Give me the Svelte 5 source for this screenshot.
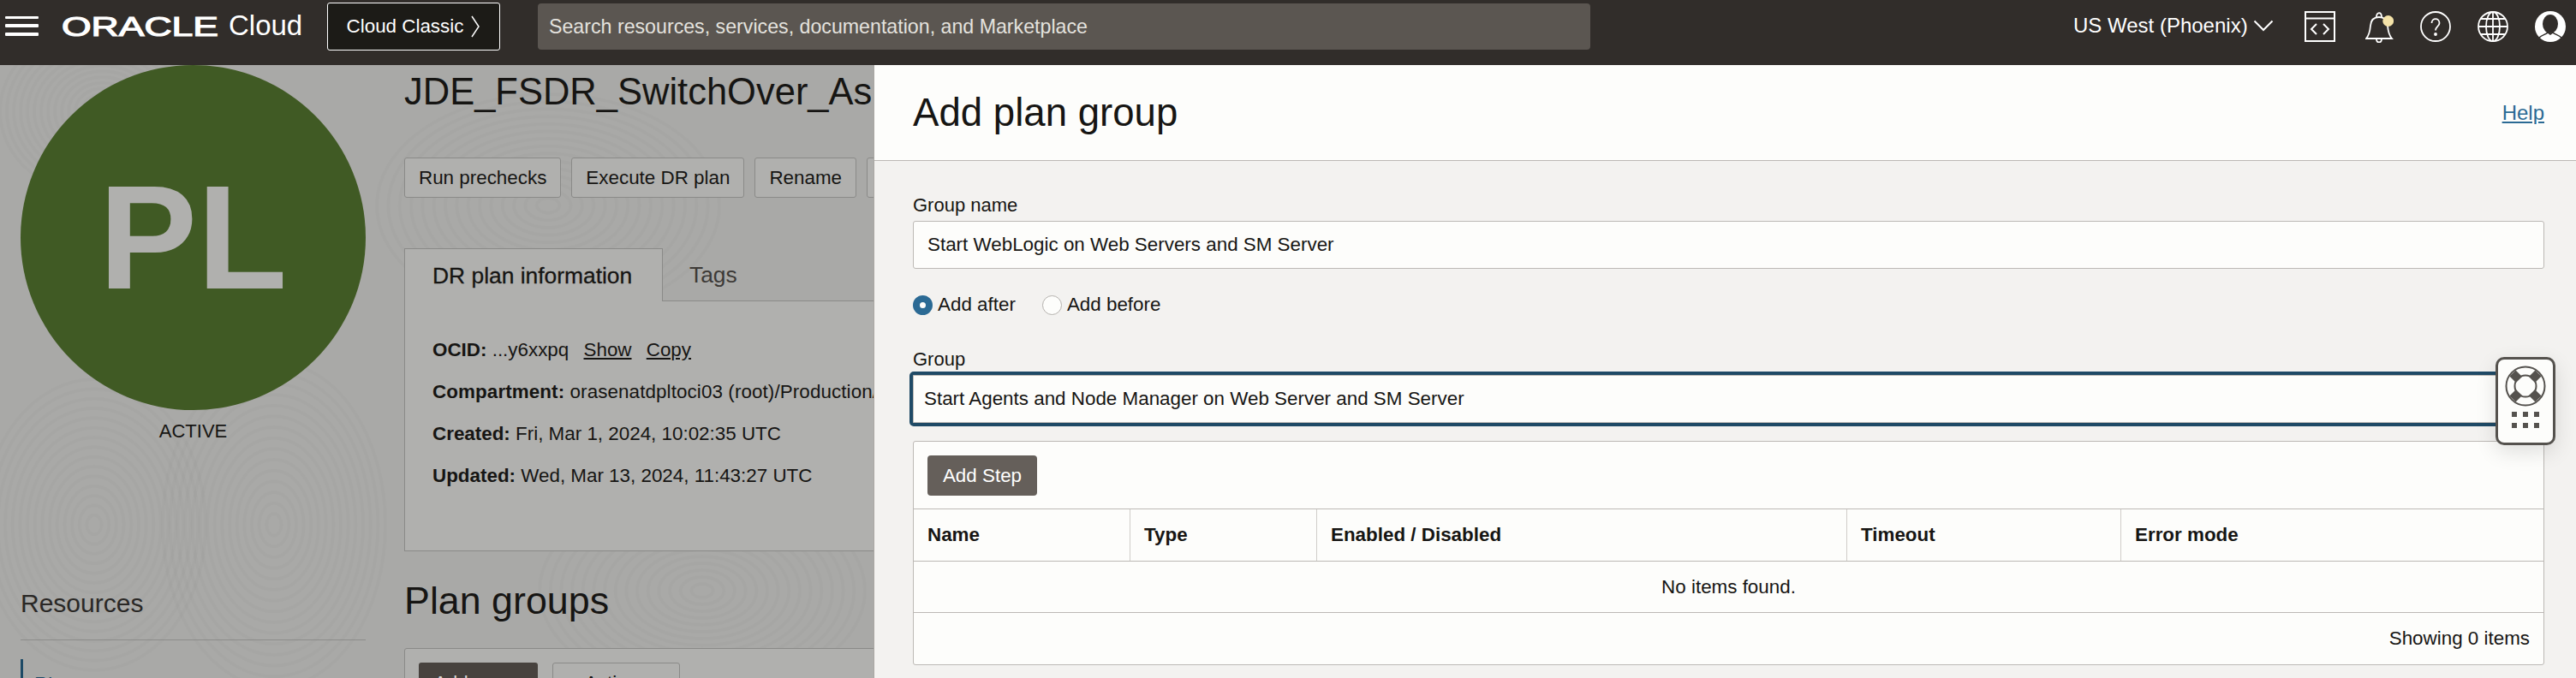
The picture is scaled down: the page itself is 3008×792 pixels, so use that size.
<script lang="ts">
  const columns = [
    { label: "Name", width: 253 },
    { label: "Type", width: 218 },
    { label: "Enabled / Disabled", width: 619 },
    { label: "Timeout", width: 320 },
    { label: "Error mode", width: 0 },
  ];
  const details = [
    { key: "Compartment:", value: "orasenatdpltoci03 (root)/Production/JDE_FSDR" },
    { key: "Created:", value: "Fri, Mar 1, 2024, 10:02:35 UTC" },
    { key: "Updated:", value: "Wed, Mar 13, 2024, 11:43:27 UTC" },
  ];
  // concentric rings for the faint fingerprint texture behind the overlay
  const swirls = [
    { cx: 110, cy: 613, rx: 130, ry: 170 },
    { cx: 320, cy: 613, rx: 130, ry: 190 },
    { cx: 640, cy: 240, rx: 200, ry: 130 },
    { cx: 820, cy: 690, rx: 190, ry: 120 },
    { cx: 120, cy: 130, rx: 120, ry: 100 },
  ];
  const rings = Array.from({ length: 15 }, (_, i) => (i + 1) / 15);
</script>

<div class="page">
  <header class="topbar">
    <div class="brand">
      <span class="burger"><i></i><i></i><i></i></span>
      <svg class="oracle" width="183" height="30" viewBox="0 0 183 30" aria-label="ORACLE">
        <text x="0" y="26" textLength="183" lengthAdjust="spacingAndGlyphs">ORACLE</text>
      </svg>
      <span class="cloud">Cloud</span>
    </div>
    <button class="classic">Cloud Classic
      <svg width="12" height="28" viewBox="0 0 12 28"><path d="M2 2l8 12-8 12" fill="none" stroke="#fff" stroke-width="1.5"/></svg>
    </button>
    <div class="search">Search resources, services, documentation, and Marketplace</div>
    <div class="region">US West (Phoenix)
      <svg width="24" height="14" viewBox="0 0 24 14"><path d="M1.500 1.500L12 12 22.500 1.500" fill="none" stroke="#fff" stroke-width="2"/></svg>
    </div>
    <div class="tools">
      <svg width="36" height="36" viewBox="0 0 36 36" fill="none" stroke="#fff" stroke-width="2">
        <path d="M1 1h34v34H1zM1 8.500h34"/><path d="M14 15l-6 6 6 6M22 15l6 6-6 6"/>
      </svg>
      <svg class="bell" width="33" height="37" viewBox="0 0 33 37" fill="none" stroke="#fff" stroke-width="1.800">
        <path d="M1 32c3.500-4 4.500-9 5-15 .5-6 4-10 10-10s9.500 4 10 10c.5 6 1.500 11 5 15z"/>
        <path d="M13 7c0-6.500 6-6.500 6 0M13 32c0 6 6 6 6 0"/>
        <ellipse cx="26.700" cy="11.500" rx="6.400" ry="6.500" fill="#f5e3a8" stroke="none"/>
      </svg>
      <svg width="36" height="36" viewBox="0 0 36 36" fill="none" stroke="#fff" stroke-width="1.800">
        <circle cx="18" cy="18" r="17"/><path d="M13.500 14c0-6.500 9-6.500 9 0 0 4-4.500 4-4.500 8.500"/><circle cx="18" cy="27" r="1" fill="#fff"/>
      </svg>
      <svg width="36" height="36" viewBox="0 0 36 36" fill="none" stroke="#fff" stroke-width="1.800">
        <circle cx="18" cy="18" r="17"/><ellipse cx="18" cy="18" rx="8" ry="17"/><path d="M18 1v34M1 18h34M4 9h28M4 27h28"/>
      </svg>
      <svg width="36" height="36" viewBox="0 0 36 36">
        <circle cx="18" cy="18" r="18" fill="#fff"/>
        <ellipse cx="18" cy="15" rx="9" ry="11" fill="#312d2a"/>
        <path d="M5 31c3-3 8-4 10-6l3 2 3-2c2 2 7 3 10 6" fill="none" stroke="#312d2a" stroke-width="1.500"/>
      </svg>
    </div>
  </header>

  <main class="console">
    <svg class="texture" width="1020" height="716" viewBox="0 76 1020 716" fill="none" stroke="#000" stroke-opacity="0.016" stroke-width="4">
      {#each swirls as s}
        {#each rings as k}
          <ellipse cx={s.cx} cy={s.cy} rx={s.rx * k} ry={s.ry * k} />
        {/each}
      {/each}
    </svg>

    <aside class="side">
      <div class="avatar">PL</div>
      <div class="state">ACTIVE</div>
      <h2 class="resources">Resources</h2>
      <div class="nav-item">Plans</div>
    </aside>

    <section class="content">
      <h1>JDE_FSDR_SwitchOver_Ashburn</h1>
      <div class="actions">
        <button>Run prechecks</button>
        <button>Execute DR plan</button>
        <button>Rename</button>
        <button>Move resource</button>
      </div>
      <div class="tabs">
        <div class="tab active">DR plan information</div>
        <div class="tab">Tags</div>
      </div>
      <div class="info">
        <p><b>OCID:</b> ...y6xxpq <a href="#show">Show</a> <a href="#copy">Copy</a></p>
        {#each details as d}
          <p><b>{d.key}</b> {d.value}</p>
        {/each}
      </div>
      <h2 class="plan">Plan groups</h2>
      <div class="groups">
        <button class="dark">Add group</button>
        <button>Actions</button>
      </div>
    </section>

    <section class="panel">
      <div class="panel-head">
        <h2>Add plan group</h2>
        <a href="#help">Help</a>
      </div>
      <div class="panel-body">
        <label class="lbl" for="name">Group name</label>
        <input id="name" class="field" value="Start WebLogic on Web Servers and SM Server" />
        <div class="radios">
          <span class="radio on"></span><span>Add after</span>
          <span class="radio"></span><span>Add before</span>
        </div>
        <label class="lbl second" for="group">Group</label>
        <div id="group" class="select">Start Agents and Node Manager on Web Server and SM Server</div>
        <div class="table">
          <div class="toolbar"><button class="add">Add Step</button></div>
          <div class="thead">
            {#each columns as c}
              <div class="th" style={c.width ? `width: ${c.width}px` : "flex: 1"}>{c.label}</div>
            {/each}
          </div>
          <div class="empty">No items found.</div>
          <div class="count">Showing 0 items</div>
        </div>
      </div>
      <div class="widget">
        <svg width="50" height="50" viewBox="0 0 50 50">
          <circle cx="25" cy="25" r="22.500" fill="none" stroke="#55524e" stroke-width="2"/>
          <circle cx="25" cy="25" r="12.500" fill="none" stroke="#55524e" stroke-width="2"/>
          <g stroke="#55524e" stroke-width="10">
            <path d="M10 10l7.500 7.500M40 10l-7.500 7.500M10 40l7.500-7.500M40 40l-7.500-7.500"/>
          </g>
        </svg>
        <div class="dots">
          {#each Array(6) as _}<i></i>{/each}
        </div>
      </div>
    </section>
  </main>
</div>

<style>
  :global(body) {
    margin: 0;
    overflow: hidden;
    background: #a9a9a7;
  }
  .page {
    width: 3008px;
    height: 792px;
    overflow: hidden;
    display: flex;
    flex-direction: column;
    font-family: "Liberation Sans", Arial, sans-serif;
    color: #161513;
  }
  .topbar {
    height: 76px;
    flex: none;
    background: #312d2a;
    display: flex;
    align-items: flex-start;
    color: #fff;
  }
  .brand {
    display: flex;
    align-items: center;
    height: 60px;
    padding-left: 6px;
    width: 376px;
    box-sizing: border-box;
  }
  .burger {
    display: flex;
    flex-direction: column;
    justify-content: space-between;
    width: 39px;
    height: 23px;
    margin-right: 27px;
  }
  .burger i {
    height: 3.500px;
    background: #fff;
    border-radius: 1px;
  }
  .oracle {
    margin-top: 2px;
  }
  .oracle text {
    font-size: 32px;
    font-weight: 400;
    fill: #fff;
    stroke: #fff;
    stroke-width: 1.200px;
    font-family: "Liberation Sans", sans-serif;
  }
  .cloud {
    margin-left: 12px;
    font-size: 33px;
    font-weight: 400;
  }
  .classic {
    margin: 3px 0 0 6px;
    width: 202px;
    height: 56px;
    box-sizing: border-box;
    background: #1c1b17;
    border: 1px solid #fff;
    border-radius: 3px;
    color: #fff;
    font: 22.400px "Liberation Sans", sans-serif;
    display: flex;
    align-items: center;
    justify-content: center;
    gap: 8px;
    padding: 0;
  }
  .search {
    margin: 4px 0 0 44px;
    width: 1229px;
    height: 54px;
    box-sizing: border-box;
    background: #5b5651;
    border-radius: 4px;
    color: #e4e2de;
    font-size: 23.200px;
    line-height: 54px;
    padding-left: 13px;
  }
  .region {
    margin: 0 0 0 564px;
    height: 60px;
    flex: none;
    width: 270px;
    display: flex;
    align-items: center;
    gap: 6px;
    font-size: 24px;
    white-space: nowrap;
  }
  .tools {
    display: flex;
    align-items: flex-start;
    gap: 31px;
    padding-top: 13px;
  }
  .tools svg {
    flex: none;
  }
  .bell {
    margin-left: 4px;
  }
  .console {
    position: relative;
    flex: 1;
    display: flex;
    overflow: hidden;
    background: #a9a9a7;
  }
  .texture {
    position: absolute;
    left: 0;
    top: 0;
  }
  .side {
    position: relative;
    width: 403px;
    margin-left: 24px;
    flex: none;
  }
  .avatar {
    width: 403px;
    height: 403px;
    border-radius: 50%;
    background: #405a24;
    color: #b0b0ae;
    font-size: 172px;
    font-weight: 700;
    line-height: 403px;
    text-align: center;
  }
  .state {
    font-size: 22px;
    text-align: center;
    margin-top: 12px;
    line-height: 26px;
  }
  .resources {
    margin: 170px 0 0;
    font-size: 30px;
    font-weight: 400;
    line-height: 36px;
    padding-bottom: 24px;
    border-bottom: 1px solid #8c8c8a;
    color: #2a2826;
  }
  .nav-item {
    margin-top: 22px;
    border-left: 3px solid #1d4a66;
    padding: 10px 0 0 13px;
    font-size: 24px;
    color: #1d4a66;
    line-height: 40px;
  }
  .content {
    position: relative;
    margin-left: 45px;
    flex: 1;
    min-width: 0;
    white-space: nowrap;
  }
  h1 {
    margin: 7px 0 0;
    font-size: 43.500px;
    font-weight: 400;
    line-height: 48px;
  }
  .actions {
    display: flex;
    gap: 12px;
    margin-top: 53px;
  }
  button {
    font-family: inherit;
  }
  .actions button,
  .groups button {
    height: 47px;
    box-sizing: border-box;
    padding: 0 16px;
    font-size: 22.400px;
    background: #b0b0ae;
    border: 1px solid #8a8a88;
    border-radius: 3px;
    color: #161513;
  }
  .tabs {
    display: flex;
    margin-top: 59px;
    height: 62px;
    box-sizing: border-box;
    border-bottom: 1px solid #8a8a88;
    font-size: 26.400px;
    width: 1100px;
  }
  .tab {
    padding: 0 31px;
    line-height: 62px;
    color: #3d3a37;
  }
  .tab.active {
    width: 302px;
    padding: 0 32px;
    box-sizing: border-box;
    background: #b0b0ae;
    border: 1px solid #8a8a88;
    border-bottom: 0;
    height: 62px;
    color: #161513;
    -webkit-text-stroke: 0.3px #161513;
  }
  .info {
    background: #b0b0ae;
    border-left: 1px solid #8a8a88;
    border-bottom: 1px solid #8a8a88;
    width: 1100px;
    height: 292px;
    box-sizing: border-box;
    padding-top: 32px;
    font-size: 22.400px;
  }
  .info p {
    margin: 0 0 0 32px;
    height: 49px;
    line-height: 49px;
  }
  .info p:nth-child(2) {
    letter-spacing: 0.1px;
  }
  .info a {
    color: #161513;
    margin-left: 11px;
  }
  .plan {
    margin: 33px 0 0;
    font-size: 44.800px;
    font-weight: 400;
    line-height: 48px;
  }
  .groups {
    margin-top: 32px;
    display: flex;
    gap: 17px;
    width: 1100px;
    height: 60px;
    box-sizing: border-box;
    padding: 16px 0 0 16px;
    border: 1px solid #8a8a88;
    border-radius: 3px;
    background: #b0b0ae;
  }
  .groups button {
    width: 149px;
    padding: 0;
    flex: none;
  }
  .groups button.dark {
    width: 139px;
    background: #47423e;
    color: #d8d7d5;
    border: 0;
  }
  .panel {
    position: absolute;
    left: 1020px;
    top: 0;
    right: 0;
    bottom: 0;
    background: #f3f2f0;
    border-left: 1px solid #a9a7a3;
    display: flex;
    flex-direction: column;
    font-size: 22.400px;
  }
  .panel-head {
    height: 112px;
    flex: none;
    box-sizing: border-box;
    background: #fdfdfb;
    border-bottom: 1px solid #bcb9b5;
    display: flex;
    align-items: center;
    justify-content: space-between;
    padding: 0 37px 0 45px;
  }
  .panel-head h2 {
    margin: 0;
    font-size: 45.600px;
    font-weight: 400;
  }
  .panel-head a {
    font-size: 24px;
    color: #2b6a94;
  }
  .panel-body {
    padding: 0 37px 0 45px;
    display: flex;
    flex-direction: column;
  }
  .lbl {
    display: block;
    font-size: 22px;
    line-height: 26px;
    margin-top: 39px;
    margin-bottom: 5px;
  }
  .lbl.second {
    margin-top: 39px;
    margin-bottom: 1px;
  }
  .field {
    height: 56px;
    box-sizing: border-box;
    border: 1px solid #bcb9b5;
    border-radius: 3px;
    background: #fdfdfb;
    padding: 0 16px;
    font: 22.400px "Liberation Sans", sans-serif;
    color: #161513;
    outline: none;
    width: 100%;
  }
  .radios {
    display: flex;
    align-items: center;
    margin-top: 30px;
    height: 24px;
  }
  .radio {
    width: 23px;
    height: 23px;
    box-sizing: border-box;
    border-radius: 50%;
    border: 1px solid #b5b2ae;
    background: #fdfdfb;
    margin-right: 6px;
    margin-left: 31px;
  }
  .radio.on {
    margin-left: 0;
    border: 8px solid #2b6a94;
  }
  .select {
    height: 64px;
    box-sizing: border-box;
    margin: 0 0 17px -4px;
    width: calc(100% + 4px);
    border: 4px solid #1f4a66;
    border-radius: 5px;
    background: #fdfdfb;
    box-shadow: inset 0 0 0 1px #bcb9b5;
    line-height: 55px;
    padding-left: 13px;
  }
  .table {
    height: 262px;
    box-sizing: border-box;
    border: 1px solid #bcb9b5;
    border-radius: 3px;
    background: #fdfdfb;
    display: flex;
    flex-direction: column;
  }
  .toolbar {
    height: 79px;
    box-sizing: border-box;
    padding: 16px 16px 0;
  }
  .add {
    width: 128px;
    height: 47px;
    background: #655f5a;
    color: #fff;
    border: 0;
    border-radius: 4px;
    font-size: 22.400px;
    padding: 0;
  }
  .thead {
    display: flex;
    height: 62px;
    box-sizing: border-box;
    border-top: 1px solid #bcb9b5;
    border-bottom: 1px solid #bcb9b5;
  }
  .th {
    box-sizing: border-box;
    padding-left: 16px;
    font-weight: 700;
    line-height: 60px;
    border-right: 1px solid #d0cdc9;
    flex: none;
  }
  .th:last-child {
    border-right: 0;
    flex: 1;
  }
  .empty {
    height: 60px;
    line-height: 59px;
    text-align: center;
    box-sizing: border-box;
    border-bottom: 1px solid #bcb9b5;
  }
  .count {
    flex: 1;
    text-align: right;
    line-height: 60px;
    padding-right: 16px;
  }
  .widget {
    position: absolute;
    left: 1893px;
    top: 341px;
    width: 70px;
    height: 103px;
    box-sizing: border-box;
    border: 3px solid #55524e;
    border-radius: 10px;
    background: #fdfdfb;
    box-shadow: 0 8px 24px rgba(0, 0, 0, 0.12);
    display: flex;
    flex-direction: column;
    align-items: center;
    padding-top: 6px;
  }
  .dots {
    margin-top: 5px;
    display: grid;
    grid-template-columns: repeat(3, 6px);
    gap: 7px;
  }
  .dots i {
    height: 6px;
    background: #55524e;
  }
</style>
